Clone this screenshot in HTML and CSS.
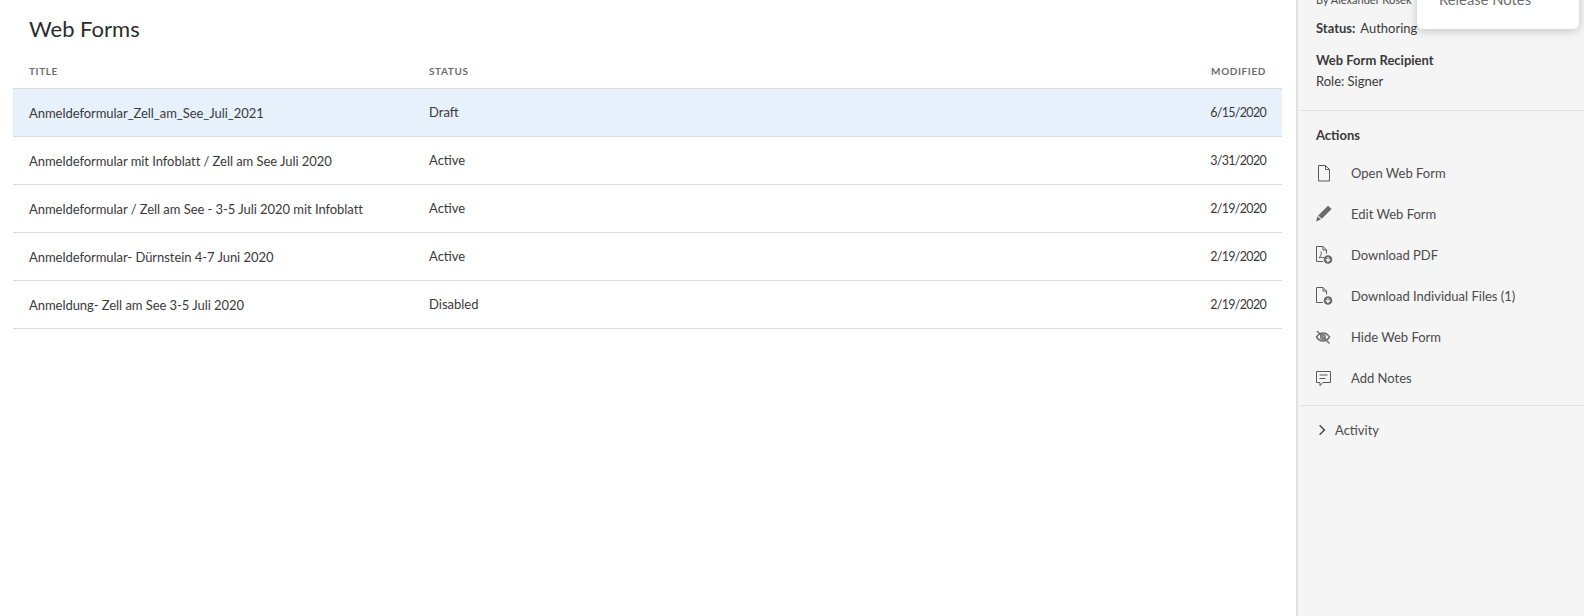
FILE: index.html
```html
<!DOCTYPE html>
<html lang="en">
<head>
  <meta charset="UTF-8">
  <title>Web Forms</title>
  <link rel="stylesheet" href="styles.css">
</head>
<body>
  <main class="content">
    <h1 class="page-title">Web Forms</h1>
    <table class="forms">
      <thead>
        <tr><th>Title</th><th>Status</th><th class="right">Modified</th></tr>
      </thead>
      <tbody>
        <tr class="selected"><td class="name">Anmeldeformular_Zell_am_See_Juli_2021</td><td>Draft</td><td class="right date">6/15/2020</td></tr>
        <tr><td class="name">Anmeldeformular mit Infoblatt / Zell am See Juli 2020</td><td>Active</td><td class="right date">3/31/2020</td></tr>
        <tr><td class="name">Anmeldeformular / Zell am See - 3-5 Juli 2020 mit Infoblatt</td><td>Active</td><td class="right date">2/19/2020</td></tr>
        <tr><td class="name">Anmeldeformular- Dürnstein 4-7 Juni 2020</td><td>Active</td><td class="right date">2/19/2020</td></tr>
        <tr><td class="name">Anmeldung- Zell am See 3-5 Juli 2020</td><td>Disabled</td><td class="right date">2/19/2020</td></tr>
      </tbody>
    </table>
  </main>

  <aside class="sidebar">
    <section class="details">
      <p class="author">By Alexander Kosek</p>
      <p class="status"><b>Status:</b> Authoring</p>
      <p class="recipient">Web Form Recipient</p>
      <p class="role">Role: Signer</p>
    </section>

    <section class="actions">
      <h2>Actions</h2>
      <ul>
        <li>
          <svg viewBox="0 0 18 18"><path d="M3.500 1.500h7l4 4v11.500h-11z M10.500 1.500v4h4"/></svg>
          Open Web Form
        </li>
        <li>
          <svg viewBox="0 0 18 18"><path class="solid" d="M13 .8l3.600 3.200-9.800 9.800-3.600-3.400z M2.500 11.200l3.400 3.300-4.900 2z"/></svg>
          Edit Web Form
        </li>
        <li>
          <svg viewBox="0 0 18 18"><path d="M8 15.500H1.500V.5h6.500l3.500 3.500v3.500 M8 .5v3.500h3.500 M4 12c1.500-1.500 2.500-3.500 2.300-6.500M4 12c2-.8 3.500-.8 5-.2"/><circle class="solid" cx="13" cy="13.500" r="4.300"/><path class="knock" d="M13 11v4M11 13.300l2 2 2-2"/></svg>
          Download PDF
        </li>
        <li>
          <svg viewBox="0 0 18 18"><path d="M8 15.500H1.500V.5h6.500l3.500 3.500v3.500 M8 .5v3.500h3.500"/><circle class="solid" cx="13" cy="13.500" r="4.300"/><path class="knock" d="M13 11v4M11 13.300l2 2 2-2"/></svg>
          Download Individual Files (1)
        </li>
        <li>
          <svg viewBox="0 0 18 18"><path class="thick" d="M1.500 9c1.800-2.700 3.800-4 6.500-4s4.700 1.300 6.500 4c-1.800 2.700-3.800 4-6.500 4s-4.700-1.300-6.500-4z"/><circle class="thick" cx="8" cy="9" r="2.200"/><path class="thick" d="M2 3l12.500 12.500"/></svg>
          Hide Web Form
        </li>
        <li>
          <svg viewBox="0 0 18 18"><path d="M1.500 2.500h14v11H8l-3 3.200v-3.200H1.500z M4.500 6h8 M4.500 9.500h6"/></svg>
          Add Notes
        </li>
      </ul>
    </section>

    <section class="activity">
      <svg viewBox="0 0 10 10"><path d="M3 1l4 4-4 4"/></svg>
      Activity
    </section>

    <div class="popup">Release Notes</div>
  </aside>
</body>
</html>
```

FILE: styles.css
```css
* {
  box-sizing: border-box;
}

html, body {
  height: 100%;
}

body {
  margin: 0;
  display: flex;
  overflow: hidden;
  font-family: 'Lato', sans-serif;
  font-size: 13px;
  color: #3a3a3a;
  background-color: white;
}

.content {
  width: 1296px;
  padding: 0 14px 0 13px;
}

.page-title {
  font-size: 22px;
  font-weight: 400;
  line-height: 30px;
  margin: 14px 0 0 16px;
  color: #2c2c2c;
}

.forms {
  width: 100%;
  margin-top: 14px;
  border-collapse: collapse;
  table-layout: fixed;
}

.forms th {
  height: 30px;
  padding: 0 16px 4px;
  font-size: 10px;
  font-weight: 700;
  letter-spacing: 0.6px;
  text-transform: uppercase;
  text-align: left;
  color: #6e6e6e;
}

.forms th:first-child, .forms td:first-child {
  width: 400px;
}

.forms td {
  height: 48px;
  padding: 0 16px;
  border-top: 1px solid #dcdcdc;
  border-bottom: 1px solid #dcdcdc;
}

.forms .name {
  padding-top: 2px;
  letter-spacing: -0.05px;
}

.forms .right {
  text-align: right;
}

.forms .date {
  font-size: 12.500px;
  letter-spacing: -0.7px;
}

.forms .selected td {
  background-color: #e7f1fc;
}

.sidebar {
  position: relative;
  flex: 1;
  height: 616px;
  overflow: hidden;
  background-color: #f5f5f5;
  border-left: 2px solid #e1e1e1;
  padding-left: 2px;
}

.details {
  padding: 0 16px 20px 16px;
  border-bottom: 1px solid #e1e1e1;
  height: 118px;
}

.details p {
  margin: 0;
}

.author {
  font-size: 11px;
  line-height: 14px;
  margin-top: -7px !important;
  color: #4b4b4b;
}

.status {
  margin-top: 11px !important;
  line-height: 20px;
}

.status b {
  margin-right: 2px;
}

.status b, .recipient {
  font-weight: 700;
}

.recipient {
  margin-top: 12px !important;
  line-height: 20px;
}

.role {
  line-height: 22px;
}

.actions {
  padding: 14px 0 7px;
  border-bottom: 1px solid #e1e1e1;
}

.actions h2 {
  margin: 0 0 0 16px;
  font-size: 13px;
  font-weight: 700;
  line-height: 20px;
}

.actions ul {
  list-style: none;
  margin: 7px 0 0;
  padding: 0;
}

.actions li {
  display: flex;
  align-items: center;
  gap: 18px;
  height: 41px;
  padding-left: 15px;
  color: #4b4b4b;
}

.actions svg {
  width: 18px;
  height: 18px;
  flex: none;
  fill: none;
  stroke: #5a5a5a;
  stroke-width: 1;
}

.actions svg .solid {
  fill: #6a6a6a;
  stroke: none;
}

.actions svg .knock {
  stroke: #f5f5f5;
  stroke-width: 1.300;
}

.actions svg .thick {
  stroke: #6e6e6e;
  stroke-width: 1.500;
}

.activity {
  display: flex;
  align-items: center;
  gap: 7px;
  height: 48px;
  padding-left: 16px;
  color: #4b4b4b;
}

.activity svg {
  width: 12px;
  height: 12px;
  fill: none;
  stroke: #4b4b4b;
  stroke-width: 1.300;
}

.popup {
  position: absolute;
  top: -40px;
  left: 119px;
  width: 162px;
  height: 69px;
  padding: 32px 0 0 22px;
  font-size: 14.800px;
  line-height: 1;
  color: #6e6e6e;
  background-color: white;
  border-radius: 6px;
  box-shadow: 0 2px 10px rgba(0, 0, 0, 0.2);
}
```
